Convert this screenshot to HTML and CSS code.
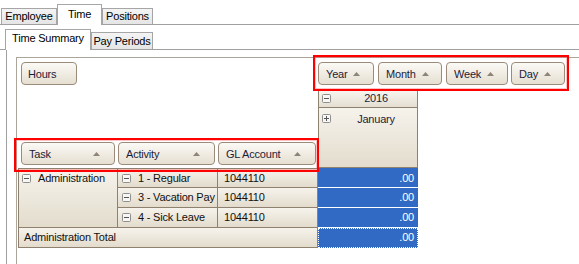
FILE: index.html
```html
<!DOCTYPE html>
<html>
<head>
<meta charset="utf-8">
<link rel="stylesheet" href="styles.css">
</head>
<body>
<div class="tabstrip main">
  <div class="tab w-employee">Employee</div>
  <div class="tab active w-time">Time</div>
  <div class="tab w-positions">Positions</div>
</div>
<div class="tabstrip sub">
  <div class="tab active w-summary">Time Summary</div>
  <div class="tab w-periods">Pay Periods</div>
</div>
<div class="subpanel">
  <div class="pivot">
    <div class="fbtn hours">Hours</div>

    <div class="redbox colfields">
      <div class="fbtn w-year">Year<svg class="sort" width="7" height="4" viewBox="0 0 7 4"><polygon points="0,4 3.5,0 7,4" fill="#8d8477"/></svg></div>
      <div class="fbtn w-month">Month<svg class="sort" width="7" height="4" viewBox="0 0 7 4"><polygon points="0,4 3.5,0 7,4" fill="#8d8477"/></svg></div>
      <div class="fbtn w-week">Week<svg class="sort" width="7" height="4" viewBox="0 0 7 4"><polygon points="0,4 3.5,0 7,4" fill="#8d8477"/></svg></div>
      <div class="fbtn w-day">Day<svg class="sort" width="7" height="4" viewBox="0 0 7 4"><polygon points="0,4 3.5,0 7,4" fill="#8d8477"/></svg></div>
    </div>

    <div class="colhead">
      <div class="yh">
        <svg class="ico" width="9" height="9" viewBox="0 0 9 9"><rect x="0.5" y="0.5" width="8" height="8" rx="1" fill="#f7f6f3" stroke="#8e8e8e"/><line x1="2" y1="4.5" x2="7" y2="4.5" stroke="#555"/></svg>
        <span class="lbl">2016</span>
      </div>
      <div class="mh">
        <svg class="ico" width="9" height="9" viewBox="0 0 9 9"><rect x="0.5" y="0.5" width="8" height="8" rx="1" fill="#f7f6f3" stroke="#8e8e8e"/><line x1="2" y1="4.5" x2="7" y2="4.5" stroke="#555"/><line x1="4.5" y1="2" x2="4.5" y2="7" stroke="#555"/></svg>
        <span class="lbl">January</span>
      </div>
    </div>

    <div class="redbox rowfields">
      <div class="fbtn rbtn w-task">Task<svg class="sort" width="7" height="4" viewBox="0 0 7 4"><polygon points="0,4 3.5,0 7,4" fill="#8d8477"/></svg></div>
      <div class="fbtn rbtn w-activity">Activity<svg class="sort" width="7" height="4" viewBox="0 0 7 4"><polygon points="0,4 3.5,0 7,4" fill="#8d8477"/></svg></div>
      <div class="fbtn rbtn w-gl">GL Account<svg class="sort" width="7" height="4" viewBox="0 0 7 4"><polygon points="0,4 3.5,0 7,4" fill="#8d8477"/></svg></div>
    </div>

    <div class="cell task">
      <svg class="ico" width="9" height="9" viewBox="0 0 9 9"><rect x="0.5" y="0.5" width="8" height="8" rx="1" fill="#f7f6f3" stroke="#8e8e8e"/><line x1="2" y1="4.5" x2="7" y2="4.5" stroke="#555"/></svg>
      <span>Administration</span>
    </div>

    <div class="cell act r3 top">
      <svg class="ico" width="9" height="9" viewBox="0 0 9 9"><rect x="0.5" y="0.5" width="8" height="8" rx="1" fill="#f7f6f3" stroke="#8e8e8e"/><line x1="2" y1="4.5" x2="7" y2="4.5" stroke="#555"/></svg>
      <span>1 - Regular</span>
    </div>
    <div class="cell gl r3 top">1044110</div>
    <div class="val r3 first">.00</div>

    <div class="cell act r4">
      <svg class="ico" width="9" height="9" viewBox="0 0 9 9"><rect x="0.5" y="0.5" width="8" height="8" rx="1" fill="#f7f6f3" stroke="#8e8e8e"/><line x1="2" y1="4.5" x2="7" y2="4.5" stroke="#555"/></svg>
      <span>3 - Vacation Pay</span>
    </div>
    <div class="cell gl r4">1044110</div>
    <div class="val r4">.00</div>

    <div class="cell act r5">
      <svg class="ico" width="9" height="9" viewBox="0 0 9 9"><rect x="0.5" y="0.5" width="8" height="8" rx="1" fill="#f7f6f3" stroke="#8e8e8e"/><line x1="2" y1="4.5" x2="7" y2="4.5" stroke="#555"/></svg>
      <span>4 - Sick Leave</span>
    </div>
    <div class="cell gl r5">1044110</div>
    <div class="val r5">.00</div>

    <div class="cell total r6">Administration Total</div>
    <div class="val r6 focus">.00</div>
  </div>
</div>
</body>
</html>
```

FILE: styles.css
```css
* { box-sizing: border-box; }
html, body { margin: 0; padding: 0; }
body {
  width: 579px;
  height: 264px;
  overflow: hidden;
  background: #fff;
  font-family: "Liberation Sans", Arial, sans-serif;
  font-size: 11px;
  letter-spacing: -0.2px;
  color: #111;
}

/* Tabs */
.tabstrip {
  display: flex;
  align-items: flex-end;
  height: 25px;
  border-bottom: 1px solid #a0a0a0;
}
.tabstrip.main { padding-left: 1px; }
.tabstrip.sub { padding-left: 5px; }
.tab {
  border: 1px solid #a6a6a6;
  border-bottom: none;
  background: linear-gradient(#f4f4f4, #e5e5e5);
  line-height: 15px;
  text-align: center;
  white-space: nowrap;
  color: #000;
}
.main .tab { height: 16px; }
.main .tab.active { height: 21px; padding-top: 2px; }
.sub .tab { height: 17px; padding-top: 1px; }
.sub .tab.active { height: 21px; padding-top: 1px; }
.tab.active {
  background: #fff;
  margin-bottom: -1px;
}
.w-employee { width: 56px; }
.w-time { width: 45px; }
.w-positions { width: 51px; }
.w-summary { width: 86px; }
.w-periods { width: 62px; }

/* Panels */
.subpanel {
  margin-left: 6px;
  height: 214px;
  border-left: 1px solid #a0a0a0;
  padding: 7px 0 0 9px;
}
.pivot {
  height: 207px;
  border-left: 1px solid #aca599;
  border-top: 1px solid #aca599;
  display: grid;
  grid-template-columns: 1px 100px 100px 100px 100px 1fr;
  grid-template-rows: 31px 79px 20px 20px 20px 20px;
  align-content: start;
}

/* Field buttons */
.fbtn {
  display: flex;
  align-items: center;
  gap: 6px;
  height: 23px;
  border: 1px solid #9b8b7a;
  border-radius: 4px;
  background: linear-gradient(#fbfaf6, #e6dfd1);
  padding: 0 14px 0 7px;
  color: #1c1c3a;
  white-space: nowrap;
  flex: none;
}
.fbtn.rbtn { justify-content: space-between; }
.sort { display: block; flex: none; }

.hours {
  grid-column: 2 / 4;
  grid-row: 1;
  align-self: start;
  justify-self: start;
  width: 56px;
  margin: 4px 0 0 3px;
  padding-left: 6px;
}

.redbox {
  position: relative;
  z-index: 2;
  display: flex;
  border: 2px solid #ff0000;
  box-shadow: inset 0 0 0 1px rgba(255, 80, 80, 0.35);
  align-self: start;
  justify-self: start;
}
.colfields {
  grid-column: 5 / 7;
  grid-row: 1;
  width: 256px;
  height: 36px;
  margin: -3px 0 0 -5px;
  padding: 5px 2px 4px 3px;
  gap: 4px;
}
.w-year { width: 56px; }
.w-month { width: 64px; }
.w-week { width: 62px; }
.w-day { width: 54px; margin-left: -1px; }

.rowfields {
  grid-column: 2 / 5;
  grid-row: 2;
  align-self: end;
  width: 305px;
  height: 34px;
  margin: 0 0 -4px -4px;
  padding: 2px 1px 5px 5px;
  gap: 3px;
}
.w-task { width: 94px; }
.w-activity { width: 97px; }
.w-gl { width: 98px; }

/* Column header */
.colhead {
  grid-column: 5;
  grid-row: 2;
  display: flex;
  flex-direction: column;
}
.yh {
  height: 19px;
  border: 1px solid #8f8170;
  background: linear-gradient(#f8f6f0, #e5dfd2);
  display: flex;
  align-items: center;
  padding-left: 3px;
  line-height: 15px;
}
.mh {
  height: 60px;
  border: 1px solid #8f8170;
  border-top: none;
  background: linear-gradient(#f6f3ec, #e3dccd);
  display: flex;
  align-items: flex-start;
  padding: 4px 0 0 3px;
  line-height: 15px;
}
.mh .ico { margin-top: 2px; }
.lbl {
  flex: 1;
  text-align: center;
  padding-left: 4px;
  color: #1c1c3a;
}
.ico { display: block; flex: none; }

/* Cells */
.cell {
  background: linear-gradient(#f6f3ec, #e3dccd);
  border-right: 1px solid #8f8170;
  border-bottom: 1px solid #8f8170;
  padding: 2px 0 0 4px;
  line-height: 15px;
  display: flex;
  align-items: flex-start;
  gap: 7px;
  white-space: nowrap;
  overflow: hidden;
}
.cell .ico { margin-top: 3px; }
.cell.top { border-top: 1px solid #8f8170; }
.task {
  grid-column: 2;
  grid-row: 3 / span 3;
  border-left: 1px solid #8f8170;
  border-top: 1px solid #8f8170;
  padding-left: 3px;
}
.act { grid-column: 3; }
.gl { grid-column: 4; padding-left: 6px; }
.total {
  grid-column: 2 / 5;
  border-left: 1px solid #8f8170;
  padding-left: 5px;
}
.r3 { grid-row: 3; }
.r4 { grid-row: 4; }
.r5 { grid-row: 5; }
.r6 { grid-row: 6; }

.val {
  grid-column: 5;
  background: #316ac5;
  color: #fff;
  text-align: right;
  padding: 2px 4px 0 0;
  line-height: 15px;
  border-bottom: 1px solid #fff;
}
.val.first { padding-top: 3px; }
.val.focus {
  border: 1px dotted #fff;
  padding: 1px 3px 0 0;
}
```
